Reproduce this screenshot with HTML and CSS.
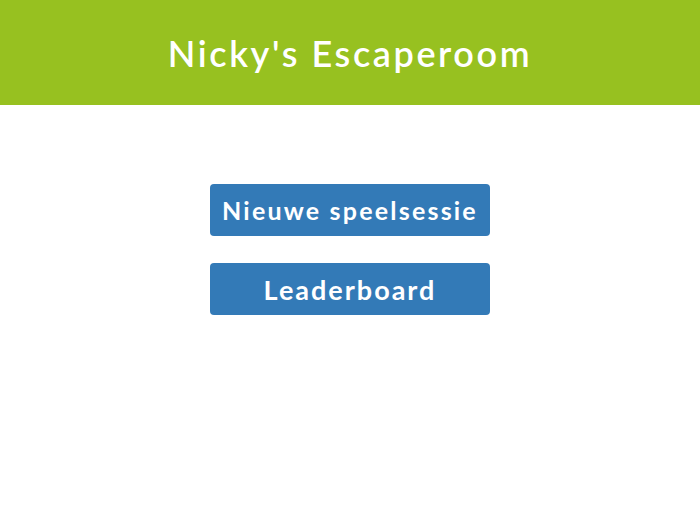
FILE: index.html
```html
<!DOCTYPE html>
<html lang="nl">
<head>
<meta charset="UTF-8">
<meta name="viewport" content="width=device-width, initial-scale=1.0">
<title>Nicky's Escaperoom</title>
<link rel="stylesheet" href="styles.css">
</head>
<body>
<header class="banner">
    <h1>Nicky's Escaperoom</h1>
</header>
<main class="menu">
    <a class="menu-btn small" href="#">Nieuwe speelsessie</a>
    <a class="menu-btn" href="#">Leaderboard</a>
</main>
</body>
</html>
```

FILE: styles.css
```css
body {
    font-family: Lato, "Open Sans", sans-serif;
    margin: 0;
    padding: 0;
    background-color: #fff;
}
.banner {
    background-color: #97c120;
    height: 105px;
    display: flex;
    align-items: center;
    justify-content: center;
}
.banner h1 {
    margin: 0;
    color: #fff;
    font-size: 36px;
    font-weight: 600;
    letter-spacing: 2.6px;
}
.menu {
    display: flex;
    flex-direction: column;
    align-items: center;
    gap: 27px;
    padding-top: 79px;
}
.menu-btn {
    display: flex;
    align-items: center;
    justify-content: center;
    width: 280px;
    height: 52px;
    background-color: #337ab7;
    color: #fff;
    text-decoration: none;
    font-size: 27px;
    font-weight: 700;
    letter-spacing: 2px;
    border-radius: 4px;
}
.menu-btn.small {
    font-size: 25px;
    letter-spacing: 2.2px;
}
```
